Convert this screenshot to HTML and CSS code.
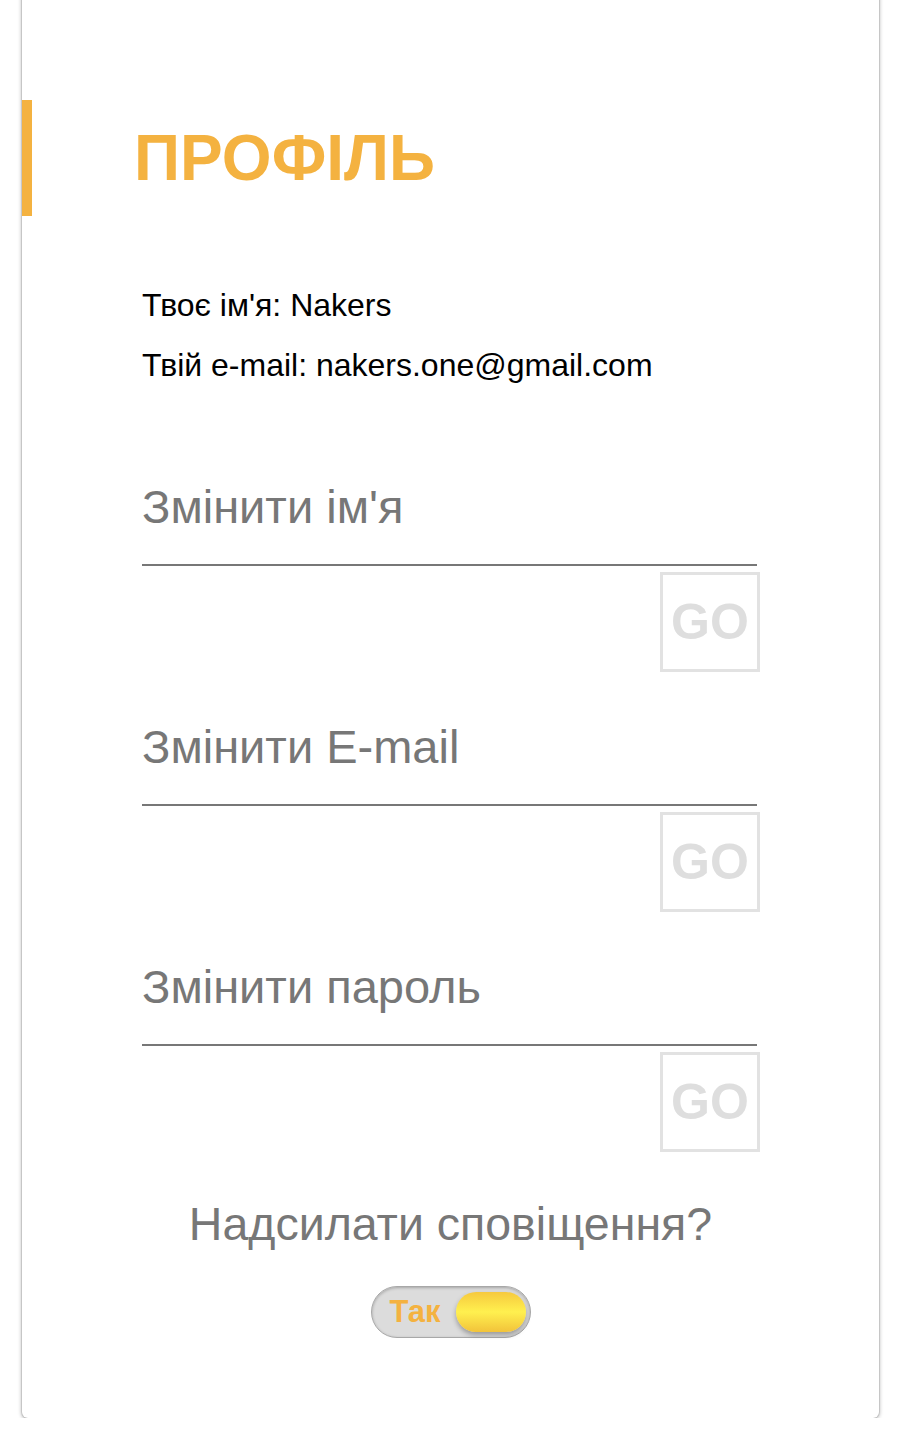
FILE: index.html
```html
<!DOCTYPE html>
<html lang="uk">
<head>
<meta charset="utf-8">
<title>Профіль</title>
<link rel="stylesheet" href="styles.css">
</head>
<body>
<div class="card">
  <h1 class="title">ПРОФІЛЬ</h1>
  <div class="content">
    <div class="info">
      <p>Твоє ім'я: Nakers</p>
      <p>Твій e-mail: nakers.one@gmail.com</p>
    </div>
    <form class="field">
      <input class="field-input" type="text" placeholder="Змінити ім'я">
      <button class="go" type="button">GO</button>
    </form>
    <form class="field">
      <input class="field-input" type="email" placeholder="Змінити E-mail">
      <button class="go" type="button">GO</button>
    </form>
    <form class="field">
      <input class="field-input" type="password" placeholder="Змінити пароль">
      <button class="go" type="button">GO</button>
    </form>
  </div>
  <div class="notify">
    <p class="notify-label">Надсилати сповіщення?</p>
    <div class="toggle">
      <span class="toggle-text">Так</span>
      <span class="toggle-knob"></span>
    </div>
  </div>
</div>
</body>
</html>
```
FILE: styles.css
```css
html, body {
  margin: 0;
  padding: 0;
  background: #fff;
}
body {
  font-family: "Liberation Sans", Arial, sans-serif;
}
.card {
  box-sizing: border-box;
  width: 857px;
  margin: -10px 0 0 22px;
  padding: 110px 0 80px;
  background: #fff;
  border-radius: 6px;
  box-shadow: 0 0 0 1px rgba(0, 0, 0, 0.08), 0 1px 4px rgba(0, 0, 0, 0.38);
}
.title {
  margin: 0;
  height: 116px;
  line-height: 116px;
  border-left: 10px solid #f4b240;
  padding-left: 102px;
  font-size: 64px;
  font-weight: 700;
  color: #f4b240;
}
.content {
  width: 618px;
  margin-left: 120px;
  padding-top: 59px;
}
.info p {
  margin: 0;
  font-size: 32px;
  line-height: 60px;
  color: #000;
}
.field {
  display: flex;
  flex-direction: column;
  align-items: flex-end;
  margin: 0;
}
.info + .field {
  margin-top: 53px;
}
.field + .field {
  margin-top: 16px;
}
.field-input {
  box-sizing: content-box;
  width: 615px;
  height: 116px;
  margin: 0;
  padding: 0;
  border: none;
  border-bottom: 2px solid #777;
  outline: none;
  background: transparent;
  font-family: "Liberation Sans", Arial, sans-serif;
  font-size: 47px;
  color: #555;
  align-self: flex-start;
}
.field-input::placeholder {
  color: #777;
  opacity: 1;
}
.go {
  box-sizing: border-box;
  width: 100px;
  height: 100px;
  margin-top: 6px;
  padding: 0;
  border: 3px solid #e2e2e2;
  background: #fff;
  font-family: "Liberation Sans", Arial, sans-serif;
  font-size: 50px;
  font-weight: 700;
  color: #dedede;
  cursor: pointer;
}
.notify {
  display: flex;
  flex-direction: column;
  align-items: center;
  padding-top: 42px;
}
.notify-label {
  margin: 0;
  font-size: 46.5px;
  line-height: 60px;
  color: #777;
}
.toggle {
  box-sizing: border-box;
  display: flex;
  align-items: center;
  justify-content: space-between;
  width: 160px;
  height: 52px;
  margin-top: 32px;
  padding: 0 4px 0 18px;
  border: 1px solid #a8a8a8;
  border-radius: 26px;
  background: #dcdcdc;
  box-shadow: inset 0 1px 3px rgba(0, 0, 0, 0.25);
}
.toggle-text {
  font-size: 31px;
  font-weight: 700;
  color: #f4b240;
}
.toggle-knob {
  width: 70px;
  height: 40px;
  border-radius: 20px;
  background: linear-gradient(to bottom, #f6c93e 0%, #fff04f 50%, #f2c33a 100%);
  box-shadow: 0 3px 5px rgba(0, 0, 0, 0.3);
}
```
